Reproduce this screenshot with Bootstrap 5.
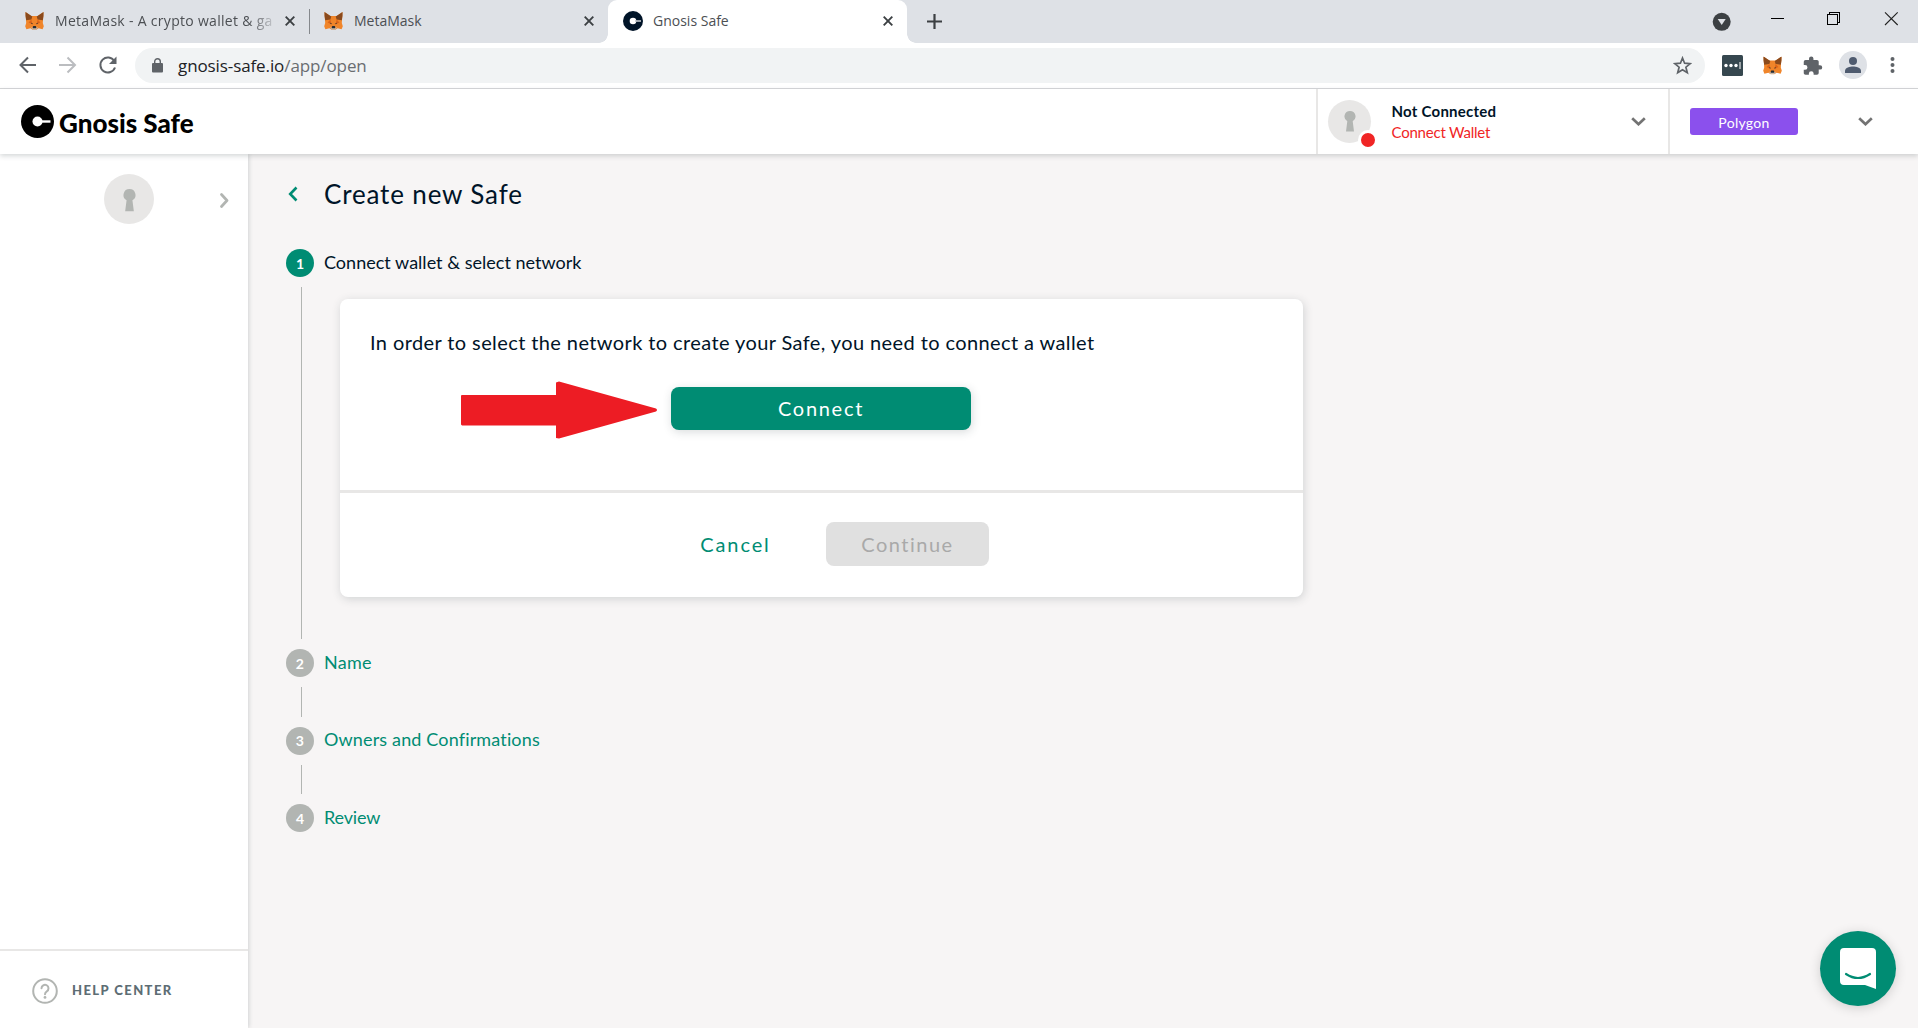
<!DOCTYPE html>
<html lang="en">
<head>
<meta charset="utf-8">
<title>Gnosis Safe</title>
<link href="https://cdn.jsdelivr.net/npm/bootstrap@5.3.0/dist/css/bootstrap.min.css" rel="stylesheet">
<style>
  body { width: 1918px; height: 1028px; overflow: hidden; font-family: Lato, sans-serif; color: #001428; background: #f7f5f5; }
  svg { display: block; flex: none; }
  .ui { font-family: "Open Sans", "Noto Sans", sans-serif; white-space: nowrap; }
  .tabstrip { height: 43px; background: #dee1e6; padding-left: 10px; }
  .tab { height: 43px; padding-bottom: 1px; color: #4c4f53; font-size: 14px; }
  .tab-1 { width: 300px; padding: 0 15px 1px 15px; letter-spacing: .3px; }
  .tab-1 .ttl { width: 220px; margin-left: 11px; -webkit-mask-image: linear-gradient(90deg, #000 193px, transparent 224px); }
  .tab-2 { width: 298px; padding: 0 14px 1px 14px; }
  .ttl { margin-left: 11px; padding-bottom: 2px; }
  .tab-on { width: 299px; background: #fff; border-radius: 9px 9px 0 0; padding: 0 14px 1px 15px; position: relative; }
  .tab-on .ttl { margin-left: 10px; }
  .tab-on::before, .tab-on::after { content: ""; position: absolute; bottom: 0; width: 9px; height: 9px; }
  .tab-on::before { left: -9px; background: radial-gradient(circle at 0 0, transparent 8.5px, #fff 9px); }
  .tab-on::after { right: -9px; background: radial-gradient(circle at 100% 0, transparent 8.5px, #fff 9px); }
  .sep { width: 1px; height: 25px; background: #85888c; margin-left: -1px; }
  .tab-plus { margin: 13px 0 0 19px; }
  .toolbar { height: 46px; background: #fff; border-bottom: 1px solid #d6d7d9; padding: 0 17px 1px 17px; }
  .omni { width: 1570px; height: 35px; border-radius: 18px; background: #f1f3f4; margin-left: 17px; padding: 0 13px 0 17px; font-size: 17px; letter-spacing: -.1px; color: #6a6d71; }
  .omni b { font-weight: 400; color: #202124; }
  .url { margin-left: 15px; padding-top: 1px; }
  .exts { margin-left: 16px; }
  .hdr { height: 65px; background: #fff; box-shadow: 0 2px 5px rgba(40,54,61,.2); position: relative; z-index: 2; padding-left: 21px; }
  .brand { font-weight: 900; font-size: 26px; color: #000; margin-left: 5px; padding-top: 2px; line-height: 1; }
  .cell { border-left: 2px solid #e8e7e6; height: 65px; }
  .c-acct { width: 352px; padding: 0 22px 0 10px; }
  .c-net { width: 250px; padding: 0 45px 0 20px; }
  .ava { border-radius: 50%; background: #e8e7e6; position: relative; width: 43px; height: 43px; }
  .ava-lg { width: 50px; height: 50px; }
  .ava-dot { position: absolute; left: 30px; top: 30px; width: 20px; height: 20px; border: 3px solid #fff; border-radius: 50%; background: #f02525; }
  .acct-txt { margin-left: 20.500px; font-size: 15px; line-height: 21px; white-space: nowrap; }
  .acct-txt b { letter-spacing: .25px; }
  .acct-txt span { letter-spacing: -.22px; color: #f02525; }
  .net { width: 108px; height: 27px; border-radius: 3px; background: #8b50ed; color: #fff; font-size: 14px; letter-spacing: .3px; padding-top: 1px; }
  .side { width: 248px; background: #fff; box-shadow: 1px 0 4px rgba(40,54,61,.18); }
  .side-top { padding: 20px 20px 0 104px; }
  .side-top svg:last-child { margin: 3px -1px 0 0; }
  .help { border-top: 2px solid #e8e7e6; height: 79px; padding: 2px 0 0 32px; color: #5d6d74; font-size: 13px; font-weight: 900; letter-spacing: 1.42px; }
  .help span { margin-left: 14px; }
  .main { padding: 0 0 0 38px; }
  .ttl-row { height: 95px; padding: 16px 0 0 2px; }
  .back { margin-top: 16px; }
  .h-title { font-size: 26px; line-height: 34px; letter-spacing: .85px; margin: 7px 0 0 26px; white-space: nowrap; }
  .step { height: 28px; font-size: 18px; color: #008c73; white-space: nowrap; }
  .step > span:last-child { padding-bottom: 2px; }
  .step-no { width: 28px; height: 28px; border-radius: 50%; background: #b2b5b2; color: #fff; font-size: 14px; font-weight: 700; margin-right: 10px; flex: none; }
  .step-on { background: #008c73; }
  .step-cur { color: #001428; letter-spacing: .02px; }
  .conn { border-left: 1px solid #b2b5b2; margin: 10px 0 10px 15px; height: 29.500px; }
  .conn-open { height: 352px; padding: 12px 0 0 38px; }
  .panel { width: 963px; height: 298px; background: #fff; border-radius: 8px; box-shadow: 1px 2px 10px rgba(40,54,61,.18); }
  .panel-b { height: 191px; padding: 28px 31px 0 30px; position: relative; }
  .panel-b p { font-size: 20px; line-height: 30px; letter-spacing: .4px; white-space: nowrap; }
  .panel-f { border-top: 3px solid #e8e7e6; height: 107px; padding: 0 0 3px 329px; }
  .bt { border: 0; border-radius: 8px; padding: 0; font-size: 20px; line-height: 1; }
  .bt-connect { width: 300px; height: 43px; background: #008c73; color: #fff; box-shadow: 1px 2px 10px rgba(40,54,61,.18); margin: 30px auto 0; display: block; letter-spacing: 1.700px; padding-bottom: 1px; }
  .bt-cancel { width: 133px; height: 44px; background: none; color: #008c73; letter-spacing: 1.900px; }
  .bt-cont { width: 163px; height: 44px; background: #e0e0e0; color: #a9a9a9; margin-left: 24px; letter-spacing: 1.500px; }
  .arrow { position: absolute; left: 121px; top: 81.500px; }
  .chat { position: absolute; left: 1820px; top: 931px; width: 76px; height: 75px; border-radius: 50%; background: #008c73; box-shadow: 0 2px 12px rgba(0,0,0,.16); z-index: 3; }
</style>
<script src="https://cdn.jsdelivr.net/npm/bootstrap@5.3.0/dist/js/bootstrap.bundle.min.js"></script>
</head>
<body class="d-flex flex-column">
<svg width="0" height="0" class="position-absolute">
  <symbol id="fox" viewBox="0 0 19 18">
    <path fill="#f0852a" d="M.5 0 6 4h7l5.500-4L18 8l-.2 3 1 3.200-1.200 3-4-.9-2.300 1.500H7.700l-2.300-1.500-4 .9-1.200-3 1-3.200L1 8z"/>
    <path fill="#8b4a1c" d="M.5 0 7.300 4.600 6.400 7.500 1.200 8.200.5 4zM18.500 0l-6.800 4.600.9 2.900 5.200.7.700-4.200z"/>
    <path fill="#dd6418" d="m6.400 7.500 1 5-3.800-2zM12.600 7.500l-1 5 3.800-2z"/>
    <path fill="#c9b8ab" d="m6 15.200 1.700.4h3.600l1.700-.4-1.700 2.600H7.700z"/>
    <path fill="#232c35" d="m8 14.300.5-.4h2l.5.400.3 2H7.700zM5.700 10.800l2 .5-.5 1zM13.300 10.800l-2 .5.500 1z"/>
  </symbol>
  <symbol id="x" viewBox="0 0 10 10"><path d="m.7.700 8.600 8.600M9.300.7.700 9.300" stroke="#3c4043" stroke-width="1.900"/></symbol>
  <symbol id="down" viewBox="0 0 15 9"><path d="m1.200 1.200 6.300 6 6.300-6" fill="none" stroke="#737373" stroke-width="2.700"/></symbol>
  <symbol id="key" viewBox="0 0 12 21"><path fill="#b2b5b2" d="M6 0a5.500 5.500 0 0 1 2.700 10.300L10 20.500H2l1.300-10.200A5.500 5.500 0 0 1 6 0z"/></symbol>
</svg>

<div class="tabstrip ui d-flex">
  <div class="tab tab-1 d-flex align-items-center"><svg width="19" height="18"><use href="#fox"/></svg><span class="ttl">MetaMask - A crypto wallet &amp; ga</span><svg class="ms-auto" width="10" height="10"><use href="#x"/></svg></div>
  <div class="d-flex align-items-center"><div class="sep"></div></div>
  <div class="tab tab-2 d-flex align-items-center"><svg width="19" height="18"><use href="#fox"/></svg><span class="ttl">MetaMask</span><svg class="ms-auto" width="10" height="10"><use href="#x"/></svg></div>
  <div class="tab tab-on d-flex align-items-center"><svg width="20" height="20" viewBox="0 0 20 20"><circle cx="10" cy="10" r="10" fill="#001428"/><circle cx="10" cy="10" r="3.300" fill="#fff"/><path d="M12 10h6" stroke="#c4c9ce" stroke-width="1.600"/></svg><span class="ttl">Gnosis Safe</span><svg class="ms-auto" width="10" height="10"><use href="#x"/></svg></div>
  <svg class="tab-plus" width="17" height="17" viewBox="0 0 17 17"><path d="M8.500 1v15M1 8.500h15" stroke="#3c4043" stroke-width="2.200"/></svg>
  <svg class="ms-auto" width="206" height="43" viewBox="1712 0 206 43"><circle cx="1721.700" cy="21.800" r="9" fill="#3c4043"/><path fill="#dee1e6" d="M1717.700 19h8l-4 6z"/><path d="M1771 18.500h13M1827.500 14.500h10v10h-10zM1829.500 14.500v-2h10v10h-2" fill="none" stroke="#000" shape-rendering="crispEdges"/><path d="m1885 12.300 12.700 12.700m0-12.700L1885 25" stroke="#222" fill="none" stroke-width="1.100"/></svg>
</div>

<div class="toolbar ui d-flex align-items-center">
  <svg width="101" height="20" viewBox="17 55 101 20" fill="none" stroke="#5f6368" stroke-width="2"><path d="M36 65H21M28 57.500 20.500 65l7.500 7.500"/><path stroke="#bbbdc0" d="M59 65h15M67.500 57.500 75 65l-7.500 7.500"/><path d="M114.300 61A7.500 7.500 0 1 0 115 67.500"/><path fill="#5f6368" stroke="none" d="M116.500 56.500V64H109z"/></svg>
  <div class="omni d-flex align-items-center"><svg width="11" height="15" viewBox="0 0 11 15"><path fill="#5f6368" d="M1 5h9q1 0 1 1v7.500q0 1-1 1H1q-1 0-1-1V6q0-1 1-1z"/><path d="M2.700 6V3.500a2.800 2.800 0 0 1 5.600 0V6" fill="none" stroke="#5f6368" stroke-width="1.400"/></svg><span class="url"><b>gnosis-safe.io</b>/app/open</span>
    <svg class="ms-auto" width="19" height="19" viewBox="0 0 19 19"><path d="m9.500 2 2.100 5.200 5.600.4-4.300 3.600 1.400 5.500-4.800-3-4.800 3 1.400-5.500L1.800 7.600l5.600-.4z" fill="none" stroke="#5f6368" stroke-width="1.700"/></svg></div>
  <svg class="exts" width="179" height="30" viewBox="1721 50 179 30"><rect x="1722" y="55" width="21" height="21" rx="1.500" fill="#36474f"/><g fill="#fff"><circle cx="1726" cy="65.500" r="1.700"/><circle cx="1731" cy="65.500" r="1.700"/><circle cx="1736" cy="65.500" r="1.700"/><path d="M1739.500 62h1v7h-1z"/></g><use href="#fox" x="1762" y="56.500" width="21" height="18"/>
  <path fill="#5f6368" transform="translate(1802 55.500) scale(.88)" d="M20.500 11H19V7c0-1.100-.9-2-2-2h-4V3.500a2.500 2.500 0 0 0-5 0V5H4a2 2 0 0 0-2 2v3.800h1.500a2.700 2.700 0 0 1 0 5.400H2V20c0 1.100.9 2 2 2h3.800v-1.500a2.700 2.700 0 0 1 5.400 0V22H17a2 2 0 0 0 2-2v-4h1.500a2.500 2.500 0 0 0 0-5z"/>
  <circle cx="1853" cy="65" r="14" fill="#dee1e6"/><circle cx="1853" cy="61" r="4" fill="#4f5b6f"/><path fill="#4f5b6f" d="M1845 73v-2.300c0-3 5-4.200 8-4.200s8 1.200 8 4.200V73z"/><g fill="#5f6368"><circle cx="1892.500" cy="59" r="2"/><circle cx="1892.500" cy="65" r="2"/><circle cx="1892.500" cy="71" r="2"/></g></svg>
</div>

<header class="hdr d-flex align-items-center">
  <svg width="33" height="33" viewBox="0 0 33 33"><circle cx="16.500" cy="16.500" r="16.500"/><circle cx="16.500" cy="16.500" r="5" fill="#fff"/><path d="M20 16.500h9.500" stroke="#fff" stroke-width="2.400"/></svg>
  <span class="brand">Gnosis Safe</span>
  <div class="cell c-acct d-flex align-items-center ms-auto">
    <div class="ava d-flex align-items-center justify-content-center"><svg width="12" height="21"><use href="#key"/></svg><span class="ava-dot"></span></div>
    <div class="acct-txt"><b>Not Connected</b><br><span>Connect Wallet</span></div>
    <svg class="ms-auto" width="15" height="9"><use href="#down"/></svg>
  </div>
  <div class="cell c-net d-flex align-items-center justify-content-between"><div class="net d-flex align-items-center justify-content-center"><span>Polygon</span></div><svg width="15" height="9"><use href="#down"/></svg></div>
</header>

<div class="d-flex flex-grow-1">
  <aside class="side d-flex flex-column justify-content-between">
    <div class="side-top d-flex align-items-center justify-content-between">
      <div class="ava ava-lg d-flex align-items-center justify-content-center"><svg width="13" height="23"><use href="#key"/></svg></div>
      <svg width="9" height="15" viewBox="0 0 9 15"><path d="m1.500 1.500 5.500 6-5.500 6" fill="none" stroke="#b2b5b2" stroke-width="2.700" stroke-linecap="round" stroke-linejoin="round"/></svg>
    </div>
    <div class="help d-flex align-items-center"><svg width="26" height="26" viewBox="0 0 26 26"><circle cx="13" cy="13" r="11.800" fill="none" stroke="#b2b5b2" stroke-width="2"/><path d="M9.500 10.300a3.500 3.500 0 1 1 5.300 3c-1.300.8-1.800 1.300-1.800 2.900" fill="none" stroke="#b2b5b2" stroke-width="2" stroke-linecap="round"/><circle cx="13" cy="19.400" r="1.400" fill="#b2b5b2"/></svg><span>HELP CENTER</span></div>
  </aside>
  <main class="main">
    <div class="ttl-row d-flex align-items-start"><svg class="back" width="10" height="16" viewBox="0 0 10 16"><path d="M8.500 1.500 2.200 8l6.300 6.500" fill="none" stroke="#008c73" stroke-width="2.600"/></svg><span class="h-title">Create new Safe</span></div>
    <div class="step d-flex align-items-center"><span class="step-no step-on d-flex align-items-center justify-content-center">1</span><span class="step-cur">Connect wallet &amp; select network</span></div>
    <div class="conn conn-open">
      <div class="panel">
        <div class="panel-b"><p class="m-0">In order to select the network to create your Safe, you need to connect a wallet</p><button class="bt bt-connect" type="button">Connect</button>
          <svg class="arrow" width="196" height="58" viewBox="0 0 196 58"><path d="M1 14h94V1.500l3-1 97 27q2 1.500 0 3l-97 27-3-.5V44.500H1l-1-1v-29z" fill="#ed1c24"/></svg>
        </div>
        <div class="panel-f d-flex align-items-center"><button class="bt bt-cancel" type="button">Cancel</button><button class="bt bt-cont" type="button">Continue</button></div>
      </div>
    </div>
    <div class="step d-flex align-items-center" style="letter-spacing:.3px"><span class="step-no d-flex align-items-center justify-content-center">2</span><span>Name</span></div>
    <div class="conn"></div>
    <div class="step d-flex align-items-center" style="letter-spacing:.15px"><span class="step-no d-flex align-items-center justify-content-center">3</span><span>Owners and Confirmations</span></div>
    <div class="conn"></div>
    <div class="step d-flex align-items-center" style="letter-spacing:-.15px"><span class="step-no d-flex align-items-center justify-content-center">4</span><span>Review</span></div>
  </main>
</div>
<div class="chat d-flex align-items-center justify-content-center"><svg width="36" height="41" viewBox="0 0 36 41"><path fill="#fff" d="M4 0h28q4 0 4 4v37l-11-4H4q-4 0-4-4V4q0-4 4-4z"/><path d="M6 26q12 8 24 0" fill="none" stroke="#008c73" stroke-width="2.200" stroke-linecap="round"/></svg></div>
</body>
</html>
